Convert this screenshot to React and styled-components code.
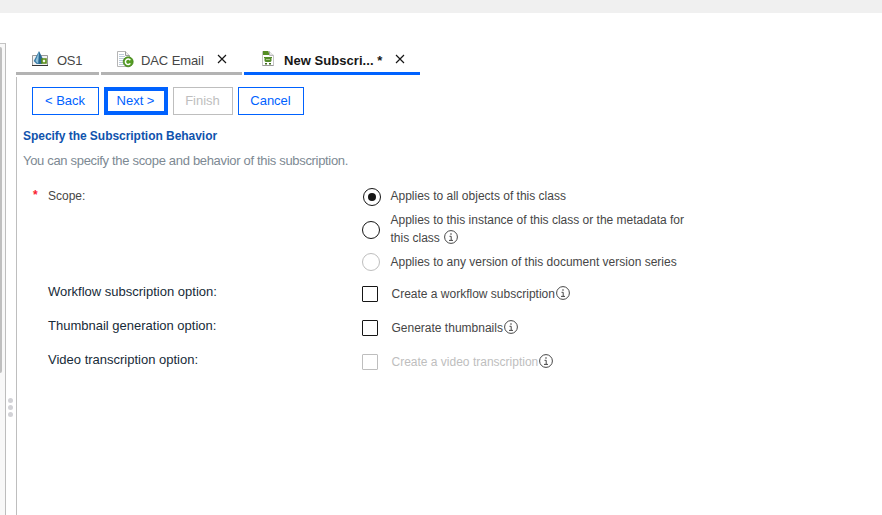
import React from "react";
import styled, { createGlobalStyle } from "styled-components";

const GlobalStyle = createGlobalStyle`
  * { box-sizing: border-box; }
  html, body { margin: 0; background: #fff; overflow: hidden; }
  body { font-family: "Liberation Sans", Arial, sans-serif; font-size: 12px; color: #464646; }
`;

const Page = styled.div`
  display: flex;
  flex-direction: column;
  width: 882px;
  height: 515px;
  overflow: hidden;
`;

const TopBar = styled.div`
  flex: none;
  height: 13px;
  background: #f0f0f0;
`;

const Workspace = styled.div`
  display: flex;
  flex: 1;
  min-height: 0;
  padding-top: 30px;
`;

const SidePane = styled.div`
  width: 6px;
  flex: none;
  border-top: 1px solid #c4c4c4;
  border-right: 1px solid #bdbdbd;
  background: #f8f8f8;
  padding-top: 3px;
`;

const ScrollThumb = styled.div`
  width: 2px;
  height: 326px;
  background: #bfbfbf;
  border-radius: 0 2px 2px 0;
`;

const Splitter = styled.div`
  width: 10px;
  flex: none;
  display: flex;
  flex-direction: column;
  align-items: flex-start;
  gap: 2px;
  padding: 355px 0 0 2px;
`;

const Dot = styled.i`
  width: 5px;
  height: 5px;
  border-radius: 50%;
  background: #d2d2d6;
`;

const Main = styled.main`
  flex: 1;
  display: flex;
  flex-direction: column;
  min-width: 0;
`;

const TabBar = styled.nav`
  display: flex;
  gap: 2px;
  height: 34px;
  flex: none;
  padding-bottom: 2px;
`;

const Tab = styled.div`
  display: flex;
  align-items: center;
  width: ${(p) => p.$width}px;
  height: 32px;
  padding: 3px 0 0 ${(p) => p.$pad}px;
  border-bottom: 3px solid ${(p) => (p.$active ? "#0062ff" : "#b3b3b3")};
  color: ${(p) => (p.$active ? "#161616" : "#464646")};
  font-weight: ${(p) => (p.$active ? 700 : 400)};
  font-size: 13px;
  white-space: pre;
  svg { flex: none; display: block; }
`;

const TabText = styled.span`
  width: ${(p) => p.$width}px;
  margin-left: ${(p) => p.$gap}px;
  letter-spacing: ${(p) => p.$spacing || 0}px;
  line-height: 16px;
  padding-top: 4px;
`;

const Panel = styled.section`
  flex: 1;
  border-left: 1px solid #bebebe;
  padding: 10px 0 0 6px;
`;

const Actions = styled.div`
  display: flex;
  gap: 5px;
  margin-left: 9px;
`;

const Button = styled.button`
  width: ${(p) => p.$width}px;
  height: 28px;
  padding: 0 1px 1px 0;
  background: #fff;
  border: ${(p) => (p.$primary ? 4 : 1)}px solid #0062ff;
  color: #0062ff;
  font: 13px "Liberation Sans", Arial, sans-serif;
  white-space: nowrap;
  &:disabled { border-color: #bebebe; color: #bebebe; }
`;

const Heading = styled.h1`
  margin: 13px 0 0;
  font-size: 12px;
  line-height: 16px;
  letter-spacing: -0.04px;
  color: #1053ad;
`;

const Intro = styled.p`
  margin: 9px 0 0;
  font-size: 13px;
  line-height: 16px;
  letter-spacing: -0.32px;
  color: #7d8993;
`;

const Form = styled.div`
  margin: 18px 0 0 9px;
`;

const FormRow = styled.div`
  display: grid;
  grid-template-columns: 16px 314px 1fr;
  height: ${(p) => p.$height}px;
`;

const Required = styled.span`
  color: #fa1d32;
  font-size: 12px;
  font-weight: 700;
  line-height: 16px;
  padding-left: 1px;
`;

const Label = styled.span`
  line-height: 18px;
  color: ${(p) => (p.$dark ? "#172b38" : "#464646")};
  font-size: ${(p) => (p.$dark ? 13 : 12)}px;
`;

const Choices = styled.div`
  display: flex;
  flex-direction: column;
`;

const Choice = styled.label`
  display: flex;
  align-items: center;
  height: ${(p) => p.$height}px;
  margin-bottom: ${(p) => p.$after || 0}px;
  color: ${(p) => (p.$disabled ? "#bebebe" : "#464646")};
  svg { flex: none; }
`;

const ChoiceText = styled.span`
  margin-left: ${(p) => p.$gap}px;
  line-height: 18px;
  white-space: nowrap;
  svg { vertical-align: -2px; margin: -1px 0 0 1px; }
`;

const RadioDial = styled.span`
  flex: none;
  display: grid;
  place-items: center;
  width: 18px;
  height: 18px;
  margin-left: ${(p) => (p.$checked ? 1 : 0)}px;
  margin-top: ${(p) => (p.$disabled ? 0 : 2)}px;
  border: 1px solid ${(p) => (p.$disabled ? "#bebebe" : "#161616")};
  border-radius: 50%;
  &::after {
    content: "";
    width: 8px;
    height: 8px;
    border-radius: 50%;
    background: ${(p) => (p.$checked ? "#161616" : "transparent")};
  }
`;

const CheckSquare = styled.span`
  flex: none;
  width: 16px;
  height: 16px;
  border: 1px solid ${(p) => (p.$disabled ? "#bebebe" : "#161616")};
  border-radius: 1px;
`;

const CheckChoice = styled(Choice)`
  height: 18px;
  margin-top: 2px;
`;

const InfoIcon = () => (
  <svg width="14" height="14" viewBox="0 0 14 14" fill="none" stroke="#464646">
    <circle cx="7" cy="7" r="6.4" />
    <path d="M5.5 6.3h1.7v4M5 10.4h4" />
    <circle cx="7" cy="4" r=".8" fill="#464646" stroke="none" />
  </svg>
);

const CloseIcon = () => (
  <svg width="10" height="10" viewBox="0 0 10 10" stroke="#161616" strokeWidth="1.15">
    <path d="M1 1l8 8M9 1L1 9" />
  </svg>
);

const ObjectStoreIcon = () => (
  <svg width="16" height="16" viewBox="0 0 16 16">
    <path d="M.5 4.5h15v10H.5z" fill="#f2f2f2" stroke="#999" />
    <path d="M0 14.5h16" stroke="#333" />
    <path d="M7 0L1.7 10l3 3H10l1-5z" fill="#397aa5" />
    <path d="M7 1L3.5 10l2.5 2.5z" fill="#91c3dc" />
    <path d="M7 1v12l3-1V7z" fill="#2b678f" />
    <path d="M10 8h4v4h-4z" fill="#f5faeb" stroke="#568b16" strokeWidth="1.6" />
  </svg>
);

const DocumentClassIcon = () => (
  <svg width="17" height="17" viewBox="0 0 17 17">
    <path d="M.5.5h8l4 4v11H.5z" fill="#fff" stroke="#b5b5b5" />
    <path d="M8.5.5v4h4" fill="#eee" stroke="#999" />
    <path d="M2 3.5h5M2 5.5h6M2 7.5h7M2 9.5h5M2 11.5h4M2 13.5h5" stroke="#bdcbd9" />
    <circle cx="11.2" cy="10.8" r="5" fill="#559d24" stroke="#3b7e13" strokeWidth=".7" />
    <path d="M13.3 9.2a2.7 2.7 0 1 0 0 3.2" fill="none" stroke="#fff" strokeWidth="1.5" />
  </svg>
);

const SubscriptionIcon = () => (
  <svg width="12" height="17" viewBox="0 0 12 17">
    <path d="M.5.5h7l4 4v10H.5z" fill="#fff" stroke="#c4c4c4" />
    <path d="M.5 14.5h11" stroke="#999" />
    <path d="M1 0h5l2 4H1z" fill="#568d25" />
    <path d="M7.5.5v3.8h4" fill="#eee" stroke="#aaa" />
    <path d="M2 6.5h8" stroke="#49791f" />
    <path d="M2.5 6h7v4l-1 1h-5l-1-1z" fill="#568d2b" />
    <path d="M4 8.5h4" stroke="#a9c98a" />
    <path d="M3 12h2v1.5H3zM7 12h2v1.5H7z" fill="#416c1c" />
  </svg>
);

const checkOptions = [
  { label: "Workflow subscription option:", text: "Create a workflow subscription" },
  { label: "Thumbnail generation option:", text: "Generate thumbnails" },
  { label: "Video transcription option:", text: "Create a video transcription", disabled: true },
];

export default function App() {
  return (
    <Page>
      <GlobalStyle />
      <TopBar />
      <Workspace>
        <SidePane><ScrollThumb /></SidePane>
        <Splitter><Dot /><Dot /><Dot /></Splitter>
        <Main>
          <TabBar>
            <Tab $width={83} $pad={16}>
              <ObjectStoreIcon />
              <TabText $gap={9} $width={30} $spacing={-0.3}>OS1</TabText>
            </Tab>
            <Tab $width={141} $pad={16}>
              <DocumentClassIcon />
              <TabText $gap={7} $width={76} $spacing={-0.1}>DAC Email</TabText>
              <CloseIcon />
            </Tab>
            <Tab $width={176} $pad={18} $active>
              <SubscriptionIcon />
              <TabText $gap={10} $width={111} $spacing={0.05}>New Subscri... *</TabText>
              <CloseIcon />
            </Tab>
          </TabBar>
          <Panel>
            <Actions>
              <Button $width={67}>&lt; Back</Button>
              <Button $width={64} $primary>Next &gt;</Button>
              <Button $width={60} disabled>Finish</Button>
              <Button $width={66}>Cancel</Button>
            </Actions>
            <Heading>Specify the Subscription Behavior</Heading>
            <Intro>You can specify the scope and behavior of this subscription.</Intro>
            <Form>
              <FormRow $height={96}>
                <Required>*</Required>
                <Label>Scope:</Label>
                <Choices>
                  <Choice $height={18} $after={6}>
                    <RadioDial $checked />
                    <ChoiceText $gap={9.5}>Applies to all objects of this class</ChoiceText>
                  </Choice>
                  <Choice $height={36} $after={6}>
                    <RadioDial />
                    <ChoiceText $gap={10.5}>
                      Applies to this instance of this class or the metadata for<br />this class <InfoIcon />
                    </ChoiceText>
                  </Choice>
                  <Choice $height={18}>
                    <RadioDial $disabled />
                    <ChoiceText $gap={10.5}>Applies to any version of this document version series</ChoiceText>
                  </Choice>
                </Choices>
              </FormRow>
              {checkOptions.map((option) => (
                <FormRow $height={34} key={option.label}>
                  <span />
                  <Label $dark>{option.label}</Label>
                  <Choices>
                    <CheckChoice $disabled={option.disabled}>
                      <CheckSquare $disabled={option.disabled} />
                      <ChoiceText $gap={13.5}>{option.text}<InfoIcon /></ChoiceText>
                    </CheckChoice>
                  </Choices>
                </FormRow>
              ))}
            </Form>
          </Panel>
        </Main>
      </Workspace>
    </Page>
  );
}
